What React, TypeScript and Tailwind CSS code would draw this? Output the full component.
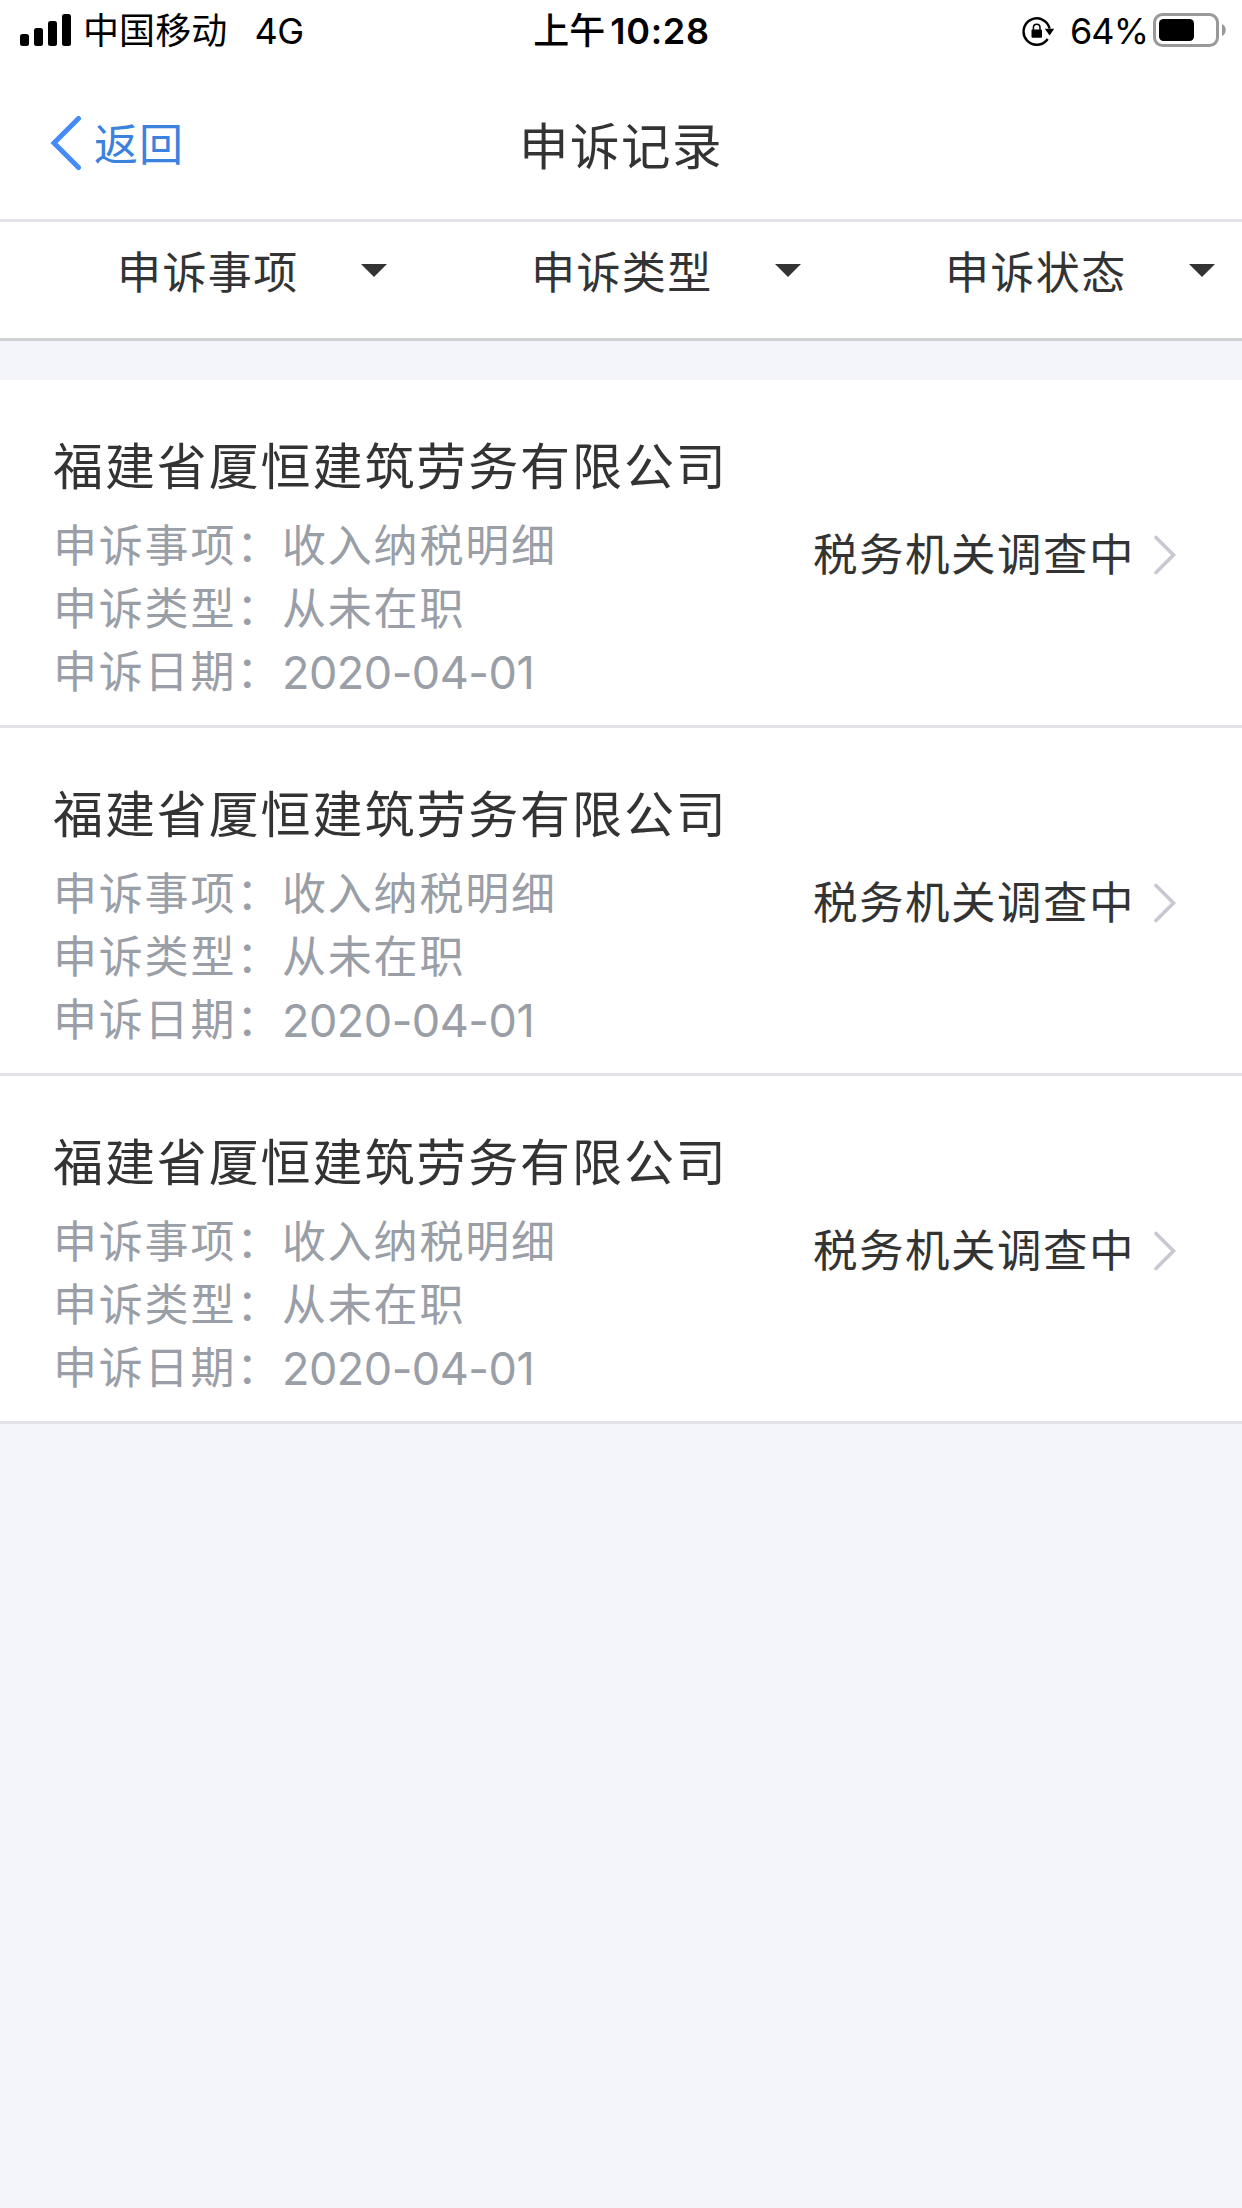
const filters = ['申诉事项', '申诉类型', '申诉状态'];

const records = [1, 2, 3].map((id) => ({
  id,
  company: '福建省厦恒建筑劳务有限公司',
  fields: [
    ['申诉事项：', '收入纳税明细'],
    ['申诉类型：', '从未在职'],
  ],
  date: '2020-04-01',
  status: '税务机关调查中',
}));

function SignalIcon() {
  return (
    <svg width="51" height="32" viewBox="0 0 51 32" className="mt-[14px] shrink-0" fill="#000">
      <rect x="0" y="20" width="9" height="12" rx="2.5" />
      <rect x="14" y="14" width="9" height="18" rx="2.5" />
      <rect x="28" y="7" width="9" height="25" rx="2.5" />
      <rect x="42" y="0" width="9" height="32" rx="2.5" />
    </svg>
  );
}

function RotationLockIcon() {
  return (
    <svg width="33" height="30" viewBox="0 0 33 30" className="mt-[17px] shrink-0" fill="none">
      <path d="M27.6 11.5A13.2 13.2 0 1 0 25.7 22" stroke="#000" strokeWidth="2.4" />
      <path d="M22.8 11.8H32.2L27.6 18.6Z" fill="#000" />
      <rect x="9.5" y="12.6" width="10.5" height="8.2" rx="1" fill="#000" />
      <path d="M11.4 13V10.6a3.3 3.3 0 0 1 6.6 0V13" stroke="#000" strokeWidth="1.5" />
    </svg>
  );
}

function BatteryIcon() {
  return (
    <svg width="74" height="34" viewBox="0 0 74 34" className="mt-[13px] shrink-0" fill="none">
      <rect x="1.5" y="1.5" width="63" height="31" rx="8" stroke="#999" strokeWidth="3" />
      <rect x="6" y="6" width="35" height="22" rx="4.5" fill="#000" />
      <path d="M69 11c5 2.4 5 9.6 0 12Z" fill="#999" />
    </svg>
  );
}

function StatusBar() {
  return (
    <div className="flex h-[60px] justify-between pl-5 pr-[15px] text-[36px] leading-[62px] text-black">
      <div className="flex w-[400px]">
        <SignalIcon />
        <span className="ml-[12px] tracking-[0.1px]">中国移动</span>
        <span className="ml-[27px] tracking-[-0.5px]">4G</span>
      </div>
      <div className="flex pr-[4px] font-semibold">
        <span className="font-medium">上午</span>
        <span className="ml-[5px] tracking-[0.7px]">10:28</span>
      </div>
      <div className="flex w-[400px] justify-end">
        <RotationLockIcon />
        <span className="ml-[15px] mr-[5px] tracking-[-1px]">64%</span>
        <BatteryIcon />
      </div>
    </div>
  );
}

function NavBar() {
  return (
    <div className="grid h-[162px] grid-cols-3 border-b-[3px] border-[#e4e4e8]">
      <button className="flex pl-[50px] text-left">
        <svg width="34" height="56" viewBox="0 0 34 56" className="mt-[55px] shrink-0" fill="none">
          <path d="M28.5 3.5L4 28L28.5 52.5" stroke="#448af8" strokeWidth="5" strokeLinecap="round" />
        </svg>
        <span className="ml-[10px] mt-[55px] text-[44px] leading-[60px] tracking-[1px] text-[#3b82de]">返回</span>
      </button>
      <h1 className="pt-[55px] text-center text-[49.5px] leading-[64px] tracking-[1.5px] text-[#333]">申诉记录</h1>
    </div>
  );
}

function FilterBar() {
  return (
    <div className="grid h-[119px] grid-cols-3 border-b-[3px] border-[#d0d1d5] bg-white">
      {filters.map((label) => (
        <button key={label} className="flex pl-[117px] pt-[21px] text-[44px] leading-[60px] tracking-[1.4px] text-[#333]">
          <span className="w-[184px] shrink-0 text-left">{label}</span>
          <svg width="26" height="13" viewBox="0 0 26 13" className="ml-[60px] mt-[21px] shrink-0">
            <path d="M0 0H26L13 13Z" fill="#333" />
          </svg>
        </button>
      ))}
    </div>
  );
}

function RecordItem({ record }: { record: (typeof records)[number] }) {
  return (
    <li className="flex h-[348px] justify-between border-b-[3px] border-[#e2e2e8] bg-white pl-[53px] pr-[65px]">
      <div className="pt-[55px]">
        <h2 className="text-[50px] leading-[64px] tracking-[1.9px] text-[#333]">{record.company}</h2>
        <dl className="mt-[16px] text-[44px] leading-[63px] tracking-[1.8px] text-[#999ea7]">
          {record.fields.map(([name, value]) => (
            <div key={name} className="flex">
              <dt className="w-[229px] whitespace-nowrap">{name}</dt>
              <dd>{value}</dd>
            </div>
          ))}
          <div className="flex">
            <dt className="w-[229px] whitespace-nowrap">申诉日期：</dt>
            <dd className="text-[45px] tracking-[-0.5px]">{record.date}</dd>
          </div>
        </dl>
      </div>
      <div className="flex pt-[145px]">
        <span className="text-[44.5px] leading-[60px] tracking-[1.5px] text-[#333]">{record.status}</span>
        <svg width="24" height="40" viewBox="0 0 24 40" className="ml-[18px] mt-[10px] shrink-0" fill="none">
          <path d="M3 2.5L20.5 20L3 37.5" stroke="#c7c8d1" strokeWidth="3.6" strokeLinecap="round" />
        </svg>
      </div>
    </li>
  );
}

export default function App() {
  return (
    <div className="min-h-screen bg-[#f4f5fa] font-['Inter','Noto_Sans_CJK_SC',sans-serif]">
      <header className="bg-white">
        <StatusBar />
        <NavBar />
      </header>
      <FilterBar />
      <ul className="mt-[39px]">
        {records.map((record) => (
          <RecordItem key={record.id} record={record} />
        ))}
      </ul>
    </div>
  );
}
